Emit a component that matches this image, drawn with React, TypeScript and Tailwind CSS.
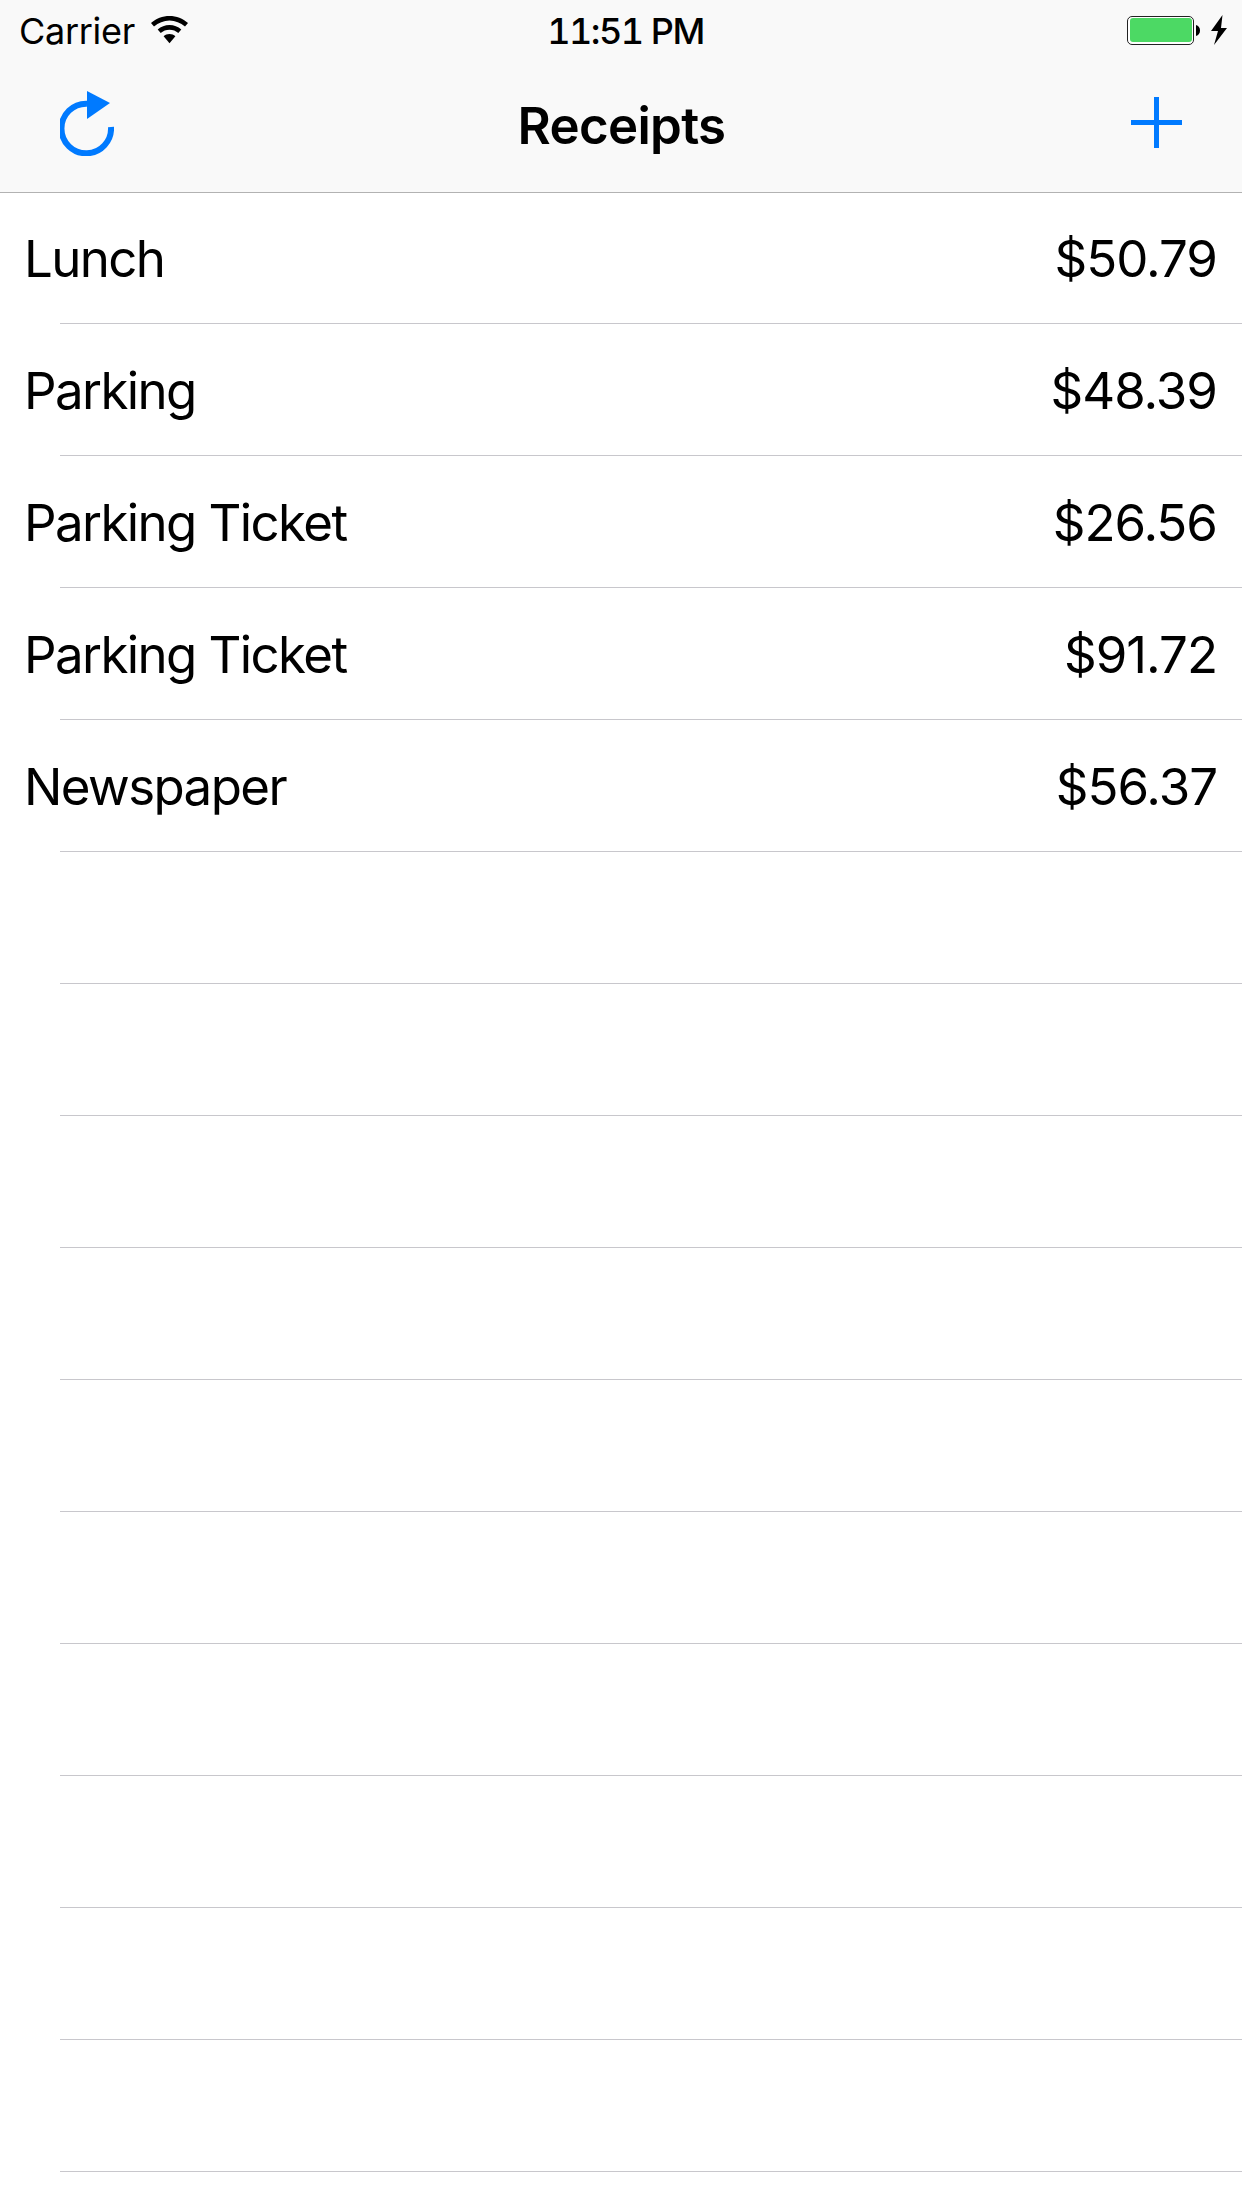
import React from 'react';

const receipts = [
  { name: 'Lunch', amount: '$50.79' },
  { name: 'Parking', amount: '$48.39' },
  { name: 'Parking Ticket', amount: '$26.56' },
  { name: 'Parking Ticket', amount: '$91.72' },
  { name: 'Newspaper', amount: '$56.37' },
];

const emptyRows = Array.from({ length: 11 }, (_, i) => i);

const App: React.FC = () => {
  return (
    <div className="w-[1242px] h-[2208px] overflow-hidden bg-white text-black font-['Inter','Liberation_Sans',sans-serif]">
      {/* Status bar + nav bar */}
      <header className="relative z-10 h-[193px] bg-[#f9f9f9] border-b border-[#b2b2b2] flex flex-col">
        <div className="h-[60px] grid grid-cols-[1fr_auto_1fr] items-center pl-[19px] pr-[15px] text-[36px]">
          <div className="flex items-center gap-[16px]">
            <span className="tracking-[-0.3px] pt-[1px]">Carrier</span>
            <svg width="37" height="28" viewBox="0 0 37 28">
              <path d="M18.5 0C11.5 0 5.2 2.600 0 7l3 3.600C7.400 7 12.700 4.600 18.500 4.600S29.600 7 34 10.600L37 7C31.800 2.600 25.500 0 18.500 0z" fill="#000" />
              <path d="M18.500 9C14 9 10 10.600 6.700 13.500l3 3.500c2.400-2.100 5.400-3.300 8.800-3.300s6.400 1.200 8.800 3.300l3-3.500C27 10.600 23 9 18.500 9z" fill="#000" />
              <path d="M18.500 18c-2.300 0-4.300.8-5.900 2.200l5.900 7 5.900-7C22.800 18.800 20.800 18 18.500 18z" fill="#000" />
            </svg>
          </div>
          <span className="font-medium tabular-nums tracking-[-1.5px] pl-[5px] pt-[1px]">11:51 PM</span>
          <div className="flex items-center justify-end gap-[11px]">
            <div className="flex items-center">
              <div className="w-[67px] h-[29px] rounded-[5px] border border-[#222] p-[1.5px] bg-white">
                <div className="w-full h-full rounded-[3px] bg-[#4cd964]" />
              </div>
              <svg width="4" height="11" viewBox="0 0 4 11" className="ml-[2px]">
                <path d="M0 0c2.500.5 4 2.800 4 5.500S2.500 10.500 0 11z" fill="#000" />
              </svg>
            </div>
            <svg width="16" height="30" viewBox="0 0 16 30">
              <path d="M11.500 0L0 16h7L3 30 16 13h-6z" fill="#000" />
            </svg>
          </div>
        </div>
        <nav className="flex-1 flex items-center justify-between px-[60px]">
          <svg width="54" height="65" viewBox="0 0 54 65" className="-mt-[5px]">
            <path d="M27 12.700A24.800 24.800 0 1 0 51 36" fill="none" stroke="#007aff" strokeWidth="6" />
            <path d="M27 0L50 12 27 28z" fill="#007aff" />
          </svg>
          <h1 className="text-[51px] font-semibold tracking-[-0.7px] mr-[2px]">Receipts</h1>
          <svg width="51" height="51" viewBox="0 0 51 51" className="-mt-[7px]">
            <path d="M23 0h5v23h23v5H28v23h-5V28H0v-5h23z" fill="#007aff" />
          </svg>
        </nav>
      </header>

      {/* Table */}
      <ul className="-mt-[1px]">
        {receipts.map((r, i) => (
          <li key={i} className="relative h-[132px] pl-[24px] pr-[25px] flex items-center justify-between text-[51px] leading-none">
            <span className="tracking-[-1.6px]">{r.name}</span>
            <span className="tracking-[-1px]">{r.amount}</span>
            <div className="absolute left-[60px] right-0 bottom-0 h-[1px] bg-[#c8c7cc]" />
          </li>
        ))}
        {emptyRows.map((i) => (
          <li key={i} className="h-[132px] pl-[60px]">
            <div className="h-full border-b border-[#c8c7cc]" />
          </li>
        ))}
      </ul>
    </div>
  );
};

export default App;
